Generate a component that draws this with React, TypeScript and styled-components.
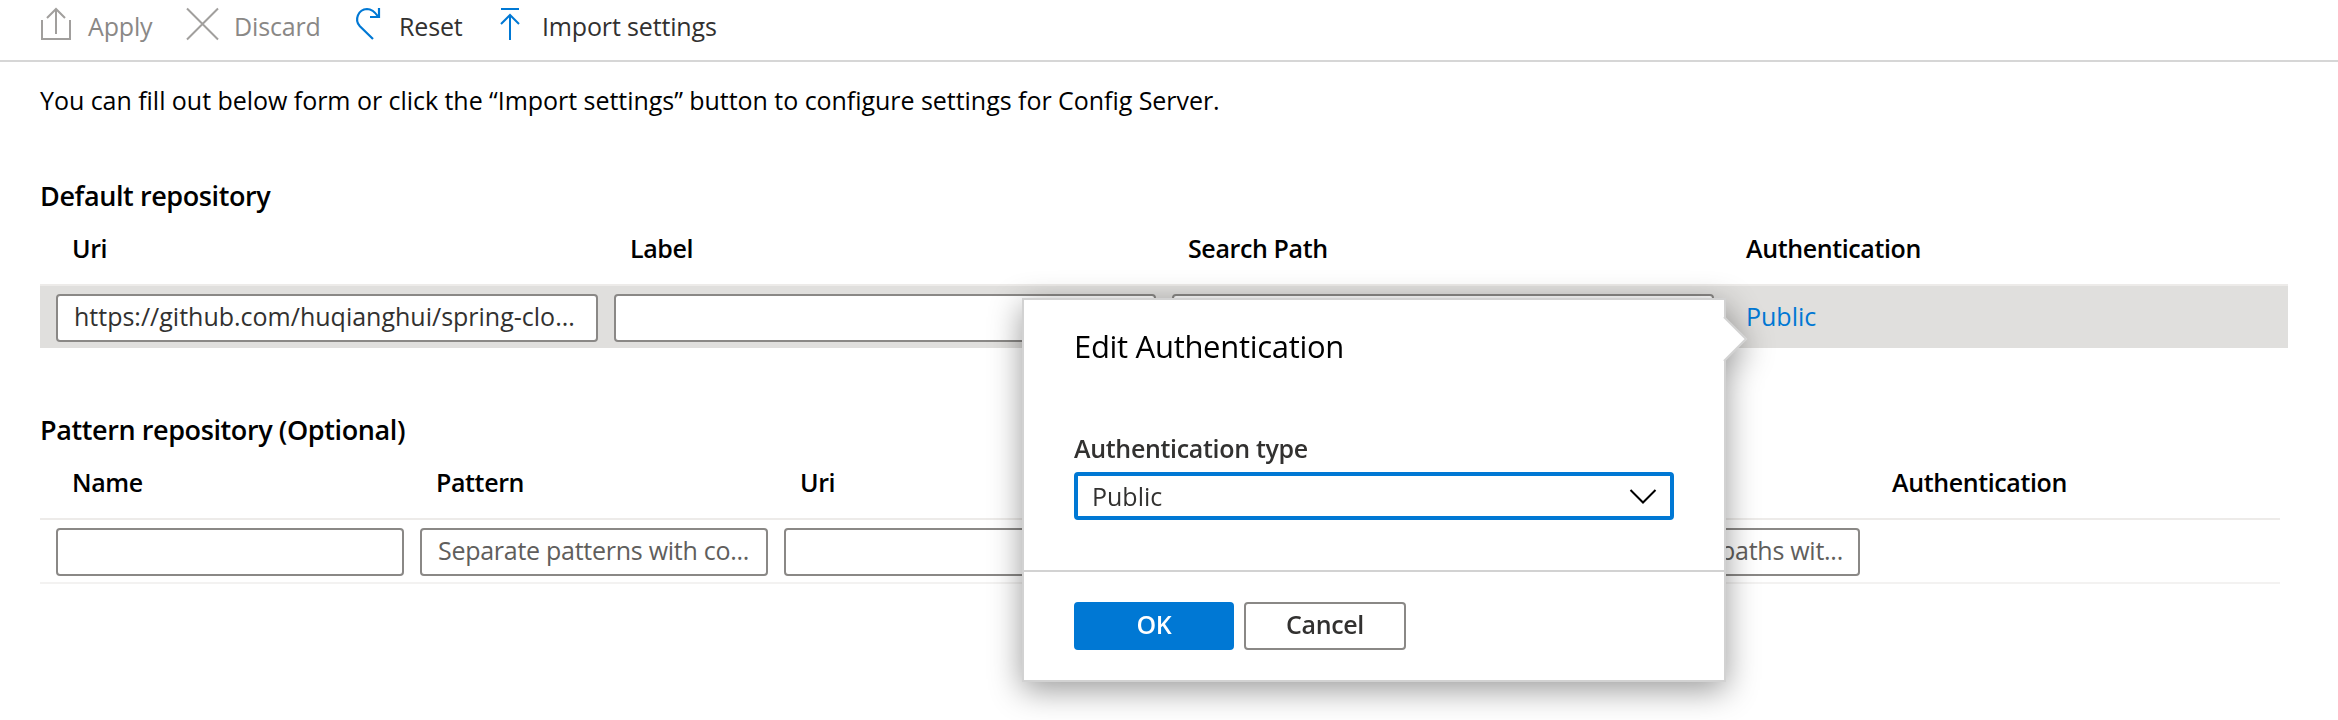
import React from "react";
import styled, { createGlobalStyle } from "styled-components";

const Global = createGlobalStyle`
  * { box-sizing: border-box; }
  body { margin: 0; background: #fff; overflow: hidden; }
`;

const Page = styled.div`
  position: relative;
  width: 2338px;
  height: 720px;
  background: #fff;
  overflow: hidden;
  font-family: "Open Sans", "Noto Sans", sans-serif;
  font-size: 25px;
  line-height: 34px;
  color: #000;
  white-space: nowrap;
`;

const Toolbar = styled.div`
  display: flex;
  height: 62px;
  padding: 9px 0 0 40px;
  border-bottom: 2px solid #d6d6d6;
`;

const Command = styled.div<{ $w: number; $gap: number; $off?: boolean }>`
  display: flex;
  width: ${(p) => p.$w}px;
  gap: ${(p) => p.$gap}px;
  color: ${(p) => (p.$off ? "#8a8886" : "#323130")};
  letter-spacing: -0.15px;
`;

const Glyph = styled.svg<{ $w: number }>`
  width: ${(p) => p.$w}px;
  height: 34px;
  margin-top: -2px;
  flex: none;
  fill: none;
  overflow: visible;
`;

const Intro = styled.p`
  margin: 21px 0 0 40px;
  height: 35px;
  letter-spacing: -0.04px;
`;

const Section = styled.section<{ $top: number }>`
  margin: ${(p) => p.$top}px 0 0 40px;
`;

const SectionTitle = styled.h2`
  margin: 0;
  height: 39px;
  line-height: 37px;
  font-size: 27px;
  font-weight: 600;
  letter-spacing: -0.4px;
`;

const Row = styled.div<{ $col: number; $w: number; $active?: boolean }>`
  display: grid;
  grid-auto-flow: column;
  grid-auto-columns: ${(p) => p.$col}px;
  width: ${(p) => p.$w}px;
  height: ${(p) => (p.$active ? 62 : 64)}px;
  padding: 8px;
  background: ${(p) => (p.$active ? "#e0dfdd" : "transparent")};
  border-bottom: ${(p) => (p.$active ? "none" : "2px solid #f3f2f1")};
`;

const HeadRow = styled(Row)`
  height: 70px;
  padding: 15px 8px 0;
  font-weight: 600;
  letter-spacing: -0.38px;
  border-bottom: 2px solid #edebe9;
  background: none;
`;

const HeadCell = styled.div`
  padding-left: 24px;
`;

const Field = styled.div<{ $hint?: boolean }>`
  height: 48px;
  margin: 0 8px;
  padding: 3px 16px;
  border: 2px solid #8a8886;
  border-radius: 4px;
  background: #fff;
  color: ${(p) => (p.$hint ? "#605e5c" : "#323130")};
  letter-spacing: ${(p) => (p.$hint ? -0.27 : 0)}px;
`;

const Link = styled.a`
  padding: 5px 0 0 24px;
  color: #0078d4;
`;

const Callout = styled.div`
  position: absolute;
  left: 1022px;
  top: 298px;
  width: 704px;
  height: 384px;
  background: #fff;
  border: 2px solid #d2d2d2;
  filter: drop-shadow(0 8px 16px rgba(0, 0, 0, 0.4));
`;

const Beak = styled.svg`
  position: absolute;
  left: 699px;
  top: 16px;
  width: 26px;
  height: 46px;
`;

const CalloutBody = styled.div`
  height: 272px;
  padding: 24px 50px 0;
  border-bottom: 2px solid #d2d2d2;
`;

const CalloutTitle = styled.h3`
  margin: 0;
  height: 44px;
  line-height: 44px;
  font-size: 31px;
  font-weight: 400;
  letter-spacing: -0.3px;
`;

const FieldLabel = styled.div`
  margin-top: 63px;
  height: 41px;
  font-weight: 600;
  letter-spacing: -0.32px;
  color: #323130;
`;

const Select = styled.div`
  display: flex;
  justify-content: space-between;
  width: 600px;
  height: 48px;
  padding: 3px 13px 0 14px;
  border: 4px solid #0078d4;
  border-radius: 4px;
  color: #323130;
`;

const Chevron = styled.svg`
  width: 28px;
  height: 16px;
  margin-top: 10px;
  fill: none;
`;

const Actions = styled.div`
  display: flex;
  gap: 10px;
  padding: 30px 50px;
`;

const Button = styled.div<{ $primary?: boolean }>`
  width: ${(p) => (p.$primary ? 160 : 162)}px;
  height: 48px;
  padding-top: 3px;
  border: 2px solid ${(p) => (p.$primary ? "#0078d4" : "#8a8886")};
  border-radius: 4px;
  background: ${(p) => (p.$primary ? "#0078d4" : "#fff")};
  color: ${(p) => (p.$primary ? "#fff" : "#323130")};
  font-weight: 600;
  letter-spacing: -0.35px;
  text-align: center;
`;

const defaultHeads = ["Uri", "Label", "Search Path", "Authentication"];
const patternHeads = ["Name", "Pattern", "Uri", "", "", "Authentication"];

export default function App() {
  return (
    <Page>
      <Global />
      <Toolbar>
        <Command $w={145} $gap={16} $off>
          <Glyph $w={32} viewBox="0 0 32 34" stroke="#a19f9d" strokeWidth="2">
            <path d="M2 13V32H30V13M16 27V3M7 11L16 2L25 11" />
          </Glyph>
          <span>Apply</span>
        </Command>
        <Command $w={170} $gap={17} $off>
          <Glyph $w={32} viewBox="0 0 32 34" stroke="#a19f9d" strokeWidth="2">
            <path d="M2 1.500L33 32.500M33 1.500L2 32.500" />
          </Glyph>
          <span>Discard</span>
        </Command>
        <Command $w={145} $gap={18}>
          <Glyph $w={26} viewBox="0 0 26 34" stroke="#0078d4" strokeWidth="2.200">
            <path d="M18 32L4.900 19.300A10.300 10.300 0 0 1 12 2C17 2 20 5 23 9.500M24 1V10H15" />
          </Glyph>
          <span>Reset</span>
        </Command>
        <Command $w={240} $gap={22}>
          <Glyph $w={20} viewBox="0 0 20 34" stroke="#0078d4" strokeWidth="2">
            <path d="M1 2H19M10 33V8M1 17L10 8L19 17" />
          </Glyph>
          <span>Import settings</span>
        </Command>
      </Toolbar>
      <Intro>
        You can fill out below form or click the “Import settings” button to configure settings for Config Server.
      </Intro>

      <Section $top={59}>
        <SectionTitle>Default repository</SectionTitle>
        <HeadRow $col={558} $w={2248}>
          {defaultHeads.map((h, i) => (
            <HeadCell key={i}>{h}</HeadCell>
          ))}
        </HeadRow>
        <Row $col={558} $w={2248} $active>
          <Field>https://github.com/huqianghui/spring-clo...</Field>
          <Field />
          <Field />
          <Link>Public</Link>
        </Row>
      </Section>

      <Section $top={63}>
        <SectionTitle>Pattern repository (Optional)</SectionTitle>
        <HeadRow $col={364} $w={2240}>
          {patternHeads.map((h, i) => (
            <HeadCell key={i}>{h}</HeadCell>
          ))}
        </HeadRow>
        <Row $col={364} $w={2240}>
          <Field />
          <Field $hint>Separate patterns with co...</Field>
          <Field />
          <Field />
          <Field $hint>Separate search paths wit...</Field>
        </Row>
      </Section>

      <Callout>
        <Beak viewBox="0 0 26 46">
          <path d="M0 0L24 23L0 46Z" fill="#fff" />
          <path d="M1 1L23 23L1 45" fill="none" stroke="#d2d2d2" strokeWidth="2" />
        </Beak>
        <CalloutBody>
          <CalloutTitle>Edit Authentication</CalloutTitle>
          <FieldLabel>Authentication type</FieldLabel>
          <Select>
            <span>Public</span>
            <Chevron viewBox="0 0 28 16" stroke="#000" strokeWidth="2">
              <path d="M1.500 1L14 13.500L26.500 1" />
            </Chevron>
          </Select>
        </CalloutBody>
        <Actions>
          <Button $primary>OK</Button>
          <Button>Cancel</Button>
        </Actions>
      </Callout>
    </Page>
  );
}
